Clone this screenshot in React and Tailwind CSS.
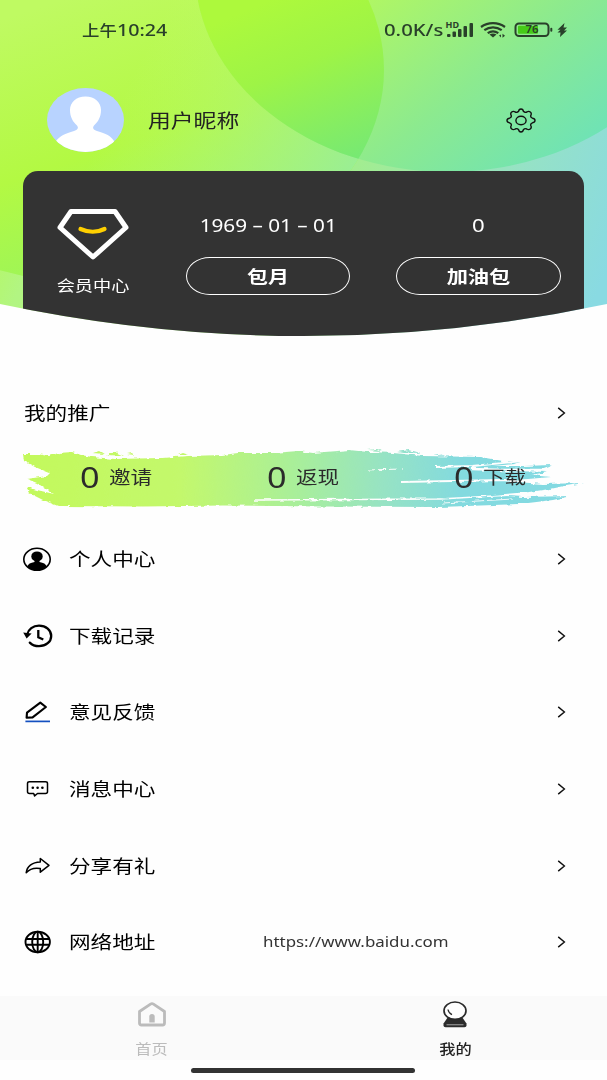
function Chevron() {
    return (
        <svg className="w-[9px] h-[12px] shrink-0" viewBox="0 0 9 12" fill="none" stroke="#111" strokeWidth="1.4">
            <path d="M1.2 0.9L7.4 6L1.2 11.1" />
        </svg>
    );
}

function UserIcon() {
    return (
        <svg className="w-[30px] h-[25px]" viewBox="0 0 30 25">
            <ellipse cx="14" cy="12.3" rx="13.2" ry="11" fill="none" stroke="#000" strokeWidth="1.6" />
            <ellipse cx="14" cy="9.4" rx="5.7" ry="5" />
            <path d="M11.5 12h5v3c4 .8 6.5 2 7.300 4.600C21 22.600 17.500 23.500 14 23.500S7 22.600 4.200 19.600C5 17 7.500 15.800 11.500 15z" />
        </svg>
    );
}

function HistoryIcon() {
    return (
        <svg className="w-[30px] h-[24px]" viewBox="0 0 30 24" fill="none" stroke="#000" strokeWidth="2.300">
            <path d="M4.200 10.500C5.300 5.200 10 1.600 16 1.600c7 0 12.200 4.500 12.200 10.300S23 22.200 16 22.200c-3.700 0-7-1.300-9.200-3.600" strokeLinecap="round" />
            <path d="M0.200 8.500L8.600 9.500L3.600 14.500z" fill="#000" stroke="none" />
            <path d="M15.300 6v7.200l5 2.300" />
        </svg>
    );
}

function PenIcon() {
    return (
        <svg className="w-[30px] h-[24px]" viewBox="0 0 30 24" fill="none" stroke="#000" strokeWidth="2.100">
            <path d="M3.600 17.700L4 12.700L17.300 2.600L22.900 7L9.600 17.400z" strokeLinejoin="round" />
            <path d="M2.400 21.400H27" stroke="#1450c0" strokeWidth="1.700" />
        </svg>
    );
}

function MessageIcon() {
    return (
        <svg className="w-[30px] h-[24px]" viewBox="0 0 30 24" fill="none" stroke="#000" strokeWidth="1.500">
            <path d="M6.500 4.800H22.500Q24.500 4.800 24.500 6.500V14.800Q24.500 16.500 22.500 16.500H14.500L11.600 18.900L10.700 16.500H6.500Q4.500 16.500 4.500 14.800V6.500Q4.500 4.800 6.500 4.800z" strokeLinejoin="round" />
            <g fill="#000" stroke="none">
                <circle cx="9.800" cy="10.700" r="1.300" />
                <circle cx="14.600" cy="10.700" r="1.300" />
                <circle cx="19.400" cy="10.700" r="1.300" />
            </g>
        </svg>
    );
}

function ShareIcon() {
    return (
        <svg className="w-[30px] h-[24px]" viewBox="0 0 30 24" fill="none" stroke="#000" strokeWidth="1.500">
            <path d="M17.300 8V4.500L26 11.400L17.300 18.200V14.500C11 13.400 6.500 15 3.200 18.800C3.800 12.500 9 8.200 17.300 8z" strokeLinejoin="round" />
        </svg>
    );
}

function GlobeIcon() {
    return (
        <svg className="w-[30px] h-[24px]" viewBox="0 0 30 24" fill="none" stroke="#000" strokeWidth="1.900">
            <ellipse cx="14.700" cy="12" rx="12.200" ry="10.200" />
            <ellipse cx="14.700" cy="12" rx="5.500" ry="10.200" />
            <path d="M14.700 2V22M3.300 9H26.100M3.300 14.800H26.100" />
        </svg>
    );
}

const menu = [
    { label: "个人中心", icon: UserIcon },
    { label: "下载记录", icon: HistoryIcon },
    { label: "意见反馈", icon: PenIcon },
    { label: "消息中心", icon: MessageIcon },
    { label: "分享有礼", icon: ShareIcon },
    { label: "网络地址", icon: GlobeIcon, value: "https://www.baidu.com" },
];

const stats = ["邀请", "返现", "下载"];

function HeaderBackground() {
    return (
        <svg className="absolute inset-0 w-[607px] h-[340px]" viewBox="0 0 607 340">
            <defs>
                <linearGradient id="base" gradientUnits="userSpaceOnUse" x1="60" y1="40" x2="607" y2="270">
                    <stop offset="0" stopColor="#b6f95a" />
                    <stop offset="0.100" stopColor="#b2f582" />
                    <stop offset="0.500" stopColor="#a4ef87" />
                    <stop offset="0.800" stopColor="#96e2c5" />
                    <stop offset="1" stopColor="#89dae2" />
                </linearGradient>
                <linearGradient id="left" gradientUnits="userSpaceOnUse" x1="60" y1="0" x2="150" y2="270">
                    <stop offset="0" stopColor="#bffa62" />
                    <stop offset="0.550" stopColor="#b3f943" />
                    <stop offset="1" stopColor="#99f45c" />
                </linearGradient>
                <linearGradient id="leftFade" gradientUnits="userSpaceOnUse" x1="140" y1="60" x2="360" y2="170">
                    <stop offset="0" stopColor="#c1f978" stopOpacity="0" />
                    <stop offset="1" stopColor="#99ee96" />
                </linearGradient>
                <linearGradient id="right" gradientUnits="userSpaceOnUse" x1="370" y1="0" x2="530" y2="200">
                    <stop offset="0" stopColor="#aff665" />
                    <stop offset="0.500" stopColor="#8cea8f" />
                    <stop offset="1" stopColor="#6de2b8" />
                </linearGradient>
                <linearGradient id="overlap" gradientUnits="userSpaceOnUse" x1="270" y1="0" x2="340" y2="165">
                    <stop offset="0" stopColor="#adf93c" />
                    <stop offset="0.400" stopColor="#9ef446" />
                    <stop offset="1" stopColor="#77e973" />
                </linearGradient>
                <clipPath id="rightClip">
                    <ellipse cx="448" cy="-30" rx="253" ry="202" />
                </clipPath>
            </defs>
            <rect width="607" height="340" fill="url(#base)" />
            <ellipse cx="100" cy="70" rx="284" ry="214" fill="url(#left)" />
            <ellipse cx="100" cy="70" rx="284" ry="214" fill="url(#leftFade)" />
            <ellipse cx="448" cy="-30" rx="253" ry="202" fill="url(#right)" />
            <ellipse cx="100" cy="70" rx="284" ry="214" fill="url(#overlap)" clipPath="url(#rightClip)" />
        </svg>
    );
}

function StatusIcons() {
    return (
        <svg className="w-[126px] h-[20px]" viewBox="0 0 126 20" fill="#29402a">
            <text x="0.500" y="7.800" fontSize="8" fontWeight="700" textLength="13.500" lengthAdjust="spacingAndGlyphs">HD</text>
            <rect x="2" y="14" width="3.500" height="3" rx="1" />
            <rect x="7.500" y="11.500" width="3.500" height="5.500" rx="1" />
            <rect x="13" y="9" width="3.500" height="8" rx="1" />
            <rect x="18.500" y="6" width="3.500" height="11" rx="1" />
            <rect x="24.500" y="3" width="3.500" height="14" rx="1" />
            <g fill="none" stroke="#29402a" strokeWidth="2.200">
                <path d="M36 7C43 1.900 53 1.900 60 7" />
                <path d="M39.300 10.200C44.500 6.400 51.500 6.400 56.700 10.200" />
                <path d="M42.700 13.200C46 11 50 11 53.300 13.200" />
            </g>
            <path d="M44.500 14.500Q48 12.500 51.500 14.500L48 17.500z" />
            <path d="M54 15.500l2-1v3zM57.500 13.800l2.500 2-2.500 2z" />
            <rect x="70.500" y="3.500" width="33" height="12.500" rx="3.500" fill="none" stroke="#29402a" strokeWidth="2" />
            <rect x="73" y="5.700" width="20" height="8" rx="1" fill="#46cb18" />
            <rect x="105.300" y="7.700" width="2" height="4" rx="1" />
            <text x="80.500" y="13.400" fontSize="10.500" fontWeight="600" textLength="13" lengthAdjust="spacingAndGlyphs">76</text>
            <path d="M119.500 3L112.500 9.800H115.500L112.500 12.500H115.500L115 17L122 10.500H119L122 7.500H118.500z" />
        </svg>
    );
}

function BrushStroke() {
    return (
        <svg className="absolute inset-0 w-[561px] h-[68px]" viewBox="0 0 561 68">
            <defs>
                <linearGradient id="brush" gradientUnits="userSpaceOnUse" x1="0" y1="0" x2="561" y2="0">
                    <stop offset="0" stopColor="#c3f95c" />
                    <stop offset="0.280" stopColor="#c3f86c" />
                    <stop offset="0.500" stopColor="#a7ee9d" />
                    <stop offset="0.640" stopColor="#97e3c3" />
                    <stop offset="0.780" stopColor="#83dadf" />
                    <stop offset="1" stopColor="#83d9e2" />
                </linearGradient>
                <filter id="rough" x="-2%" y="-10%" width="104%" height="120%">
                    <feTurbulence type="fractalNoise" baseFrequency="0.120 0.350" numOctaves="2" seed="7" />
                    <feDisplacementMap in="SourceGraphic" scale="4" xChannelSelector="R" yChannelSelector="G" />
                    <feGaussianBlur stdDeviation="0.350" />
                </filter>
            </defs>
            <g filter="url(#rough)">
                <path
                    fill="url(#brush)"
                    d="M0 11L14 11L25 13L36 10L49 9L58 12L69 14L92 16L139 15L165 13L200 12L215 10L250 10L275 8L290 10L315 8L326 7L345 9L370 10L400 13L457 14L480 18L500 18L492 21L470 23L500 23L529 22L518 26L498 28L524 29L508 32L528 34L505 36L480 38L520 41L561 40L542 43L527 46L506 49L470 52L500 54L548 53L530 57L497 61L417 64L300 63.500L200 62.500L120 63.500L35 63L22 58L6 50L3 44L14 47L31 51L20 44L14 40L4 36L24 33L27 30L12 24L1 18z"
                />
                <g fill="url(#brush)">
                    <path d="M70 10l6-2 5 3zM84 12l8-3 9 4zM104 11l5-1 2 2zM155 12l5-2 6 2z" />
                    <path d="M345 7l8-1 6 2zM374 9l12-2 12 3zM410 11l9 0 3 2z" />
                </g>
                <g fill="none" stroke="#fefefe">
                    <path d="M412 24L450 23L500 18" strokeWidth="1.800" />
                    <path d="M448 26L480 27L526 27" strokeWidth="2.400" />
                    <path d="M378 39L430 38L480 37L515 38" strokeWidth="1.800" />
                    <path d="M232 57L330 56.500L417 56L470 53L530 50" strokeWidth="1.600" />
                    <path d="M345 27L380 26" strokeWidth="1" strokeDasharray="7 4" />
                    <path d="M420 60L490 56" strokeWidth="0.900" />
                </g>
            </g>
        </svg>
    );
}

export default function App() {
    return (
        <div className="w-[607px] h-[1080px] overflow-hidden bg-[#fefefe] text-black font-['Noto_Sans','Noto_Sans_CJK_SC',sans-serif] flex flex-col">
            <header className="relative h-[340px] shrink-0 [clip-path:path('M0_0H607V304Q303.5_368_0_304Z')]">
                <HeaderBackground />
                <div className="relative flex flex-col">
                    {/* Barra de estado */}
                    <div className="h-[60px] flex items-center pl-[82px] font-medium text-[#29402a]">
                        <span className="w-[35px] text-[15px]">
                            <span className="inline-block whitespace-nowrap origin-left scale-x-[1.16]">上午</span>
                        </span>
                        <span className="w-[267px] text-[16.5px]">
                            <span className="inline-block whitespace-nowrap origin-left scale-x-[1.19]">10:24</span>
                        </span>
                        <span className="w-[61px] text-[16.5px]">
                            <span className="inline-block whitespace-nowrap origin-left scale-x-[1.23]">0.0K/s</span>
                        </span>
                        <StatusIcons />
                    </div>

                    {/* Usuario */}
                    <div className="h-[111px] flex items-center pl-[46px]">
                        <svg className="w-[78px] h-[64px] mt-[9px]" viewBox="0 0 78 64">
                            <defs>
                                <clipPath id="avatar">
                                    <ellipse cx="39.500" cy="32" rx="38.500" ry="32" />
                                </clipPath>
                            </defs>
                            <g clipPath="url(#avatar)">
                                <rect width="78" height="64" fill="#b8d3ff" />
                                <path fill="#fff" d="M39.500 8.500C49 8.500 55 14.500 55 22C55 29 52 34 48 37.500C46 40 47.500 42 51 43C60 45.500 65 48 68 53V64H10V53C14 48 19 45.500 28 43C31.500 42 33 40 31 37.500C27 34 24 29 24 22C24 14.500 30 8.500 39.500 8.500z" />
                            </g>
                        </svg>
                        <span className="ml-6 mt-[11px] w-[358px] text-[19px] text-[#222]">
                            <span className="inline-block whitespace-nowrap origin-left scale-x-[1.2]">用户昵称</span>
                        </span>
                        <svg className="w-[30px] h-[25px] mt-[10px]" viewBox="0 0 30 25" fill="none" stroke="#111" strokeWidth="1.400" strokeLinejoin="round">
                            <path d="M12.600 3.300Q12.900 1 15 1T17.400 3.300Q18.800 5 20.800 4Q22.700 2.700 24.300 4T24.800 7.500Q24.200 9.400 26.500 10.200Q29 10.600 29 12.500T26.500 14.800Q24.200 15.600 24.800 17.500Q25.900 19.700 24.300 21T20.800 21Q18.800 20 17.400 21.700Q17 24 15 24T12.600 21.700Q11.200 20 9.200 21Q7.300 22.300 5.700 21T5.200 17.500Q5.800 15.600 3.500 14.800Q1 14.400 1 12.500T3.500 10.200Q5.800 9.400 5.200 7.500Q4.100 5.300 5.700 4T9.200 4Q11.200 5 12.600 3.300z" />
                            <ellipse cx="15" cy="12.500" rx="5.100" ry="4.300" />
                        </svg>
                    </div>

                    {/* Tarjeta de miembro */}
                    <div className="mx-[23px] h-[170px] rounded-t-[15px] bg-[#333] text-white flex">
                        <div className="w-[140px] pt-[37px] flex flex-col items-center">
                            <svg className="w-[74px] h-[54px]" viewBox="0 0 74 54" fill="none" strokeLinecap="round" strokeLinejoin="round">
                                <path d="M15 3.500H59L70 19.500L37 49L4 19.500z" stroke="#fff" strokeWidth="5" />
                                <path d="M24.500 21Q37 26.500 48.500 21" stroke="#ffd000" strokeWidth="4.200" />
                            </svg>
                            <span className="mt-[11px] text-[15px] leading-6 inline-block whitespace-nowrap scale-x-[1.21]">会员中心</span>
                        </div>
                        <div className="w-[210px] pt-[42px] flex flex-col items-center">
                            <span className="text-[18.5px] leading-6 whitespace-nowrap scale-x-[1.12]">1969 – 01 – 01</span>
                            <div className="mt-5 w-[164px] h-[38px] rounded-[24px/19px] border-[1.5px] border-white flex items-center justify-center">
                                <span className="text-[17px] mt-px font-bold scale-x-[1.23]">包月</span>
                            </div>
                        </div>
                        <div className="w-[210px] pt-[42px] flex flex-col items-center">
                            <span className="text-[18.5px] leading-6 scale-x-[1.2]">0</span>
                            <div className="mt-5 w-[165px] h-[38px] rounded-[24px/19px] border-[1.5px] border-white flex items-center justify-center">
                                <span className="text-[17px] mt-px font-bold scale-x-[1.25]">加油包</span>
                            </div>
                        </div>
                    </div>
                </div>
            </header>

            {/* Promoción */}
            <div className="mt-[43px] h-[60px] shrink-0 pl-[23.5px] pr-[41px] flex items-center justify-between">
                <span className="text-[18px] whitespace-nowrap origin-left scale-x-[1.2]">我的推广</span>
                <Chevron />
            </div>
            <div className="relative mx-[23px] h-[78px] shrink-0">
                <BrushStroke />
                <div className="relative h-[68px] flex pl-[57px] text-[#2b2b2b]">
                    {stats.map((name) => (
                        <div key={name} className="w-[187px] shrink-0 last:w-[110px] flex items-center">
                            <span className="w-[29px] -mt-px text-[29px] leading-none">
                                <span className="inline-block origin-left scale-x-[1.18]">0</span>
                            </span>
                            <span className="text-[18px] whitespace-nowrap origin-left scale-x-[1.2]">{name}</span>
                        </div>
                    ))}
                </div>
            </div>

            {/* Menú */}
            <div className="shrink-0 flex flex-col">
                {menu.map((item) => (
                    <div key={item.label} className="h-[76.6px] pl-[23px] pr-[41px] flex items-center">
                        <item.icon />
                        <span className="ml-[15.5px] mt-px w-[194.5px] text-[18px]">
                            <span className="inline-block whitespace-nowrap origin-left scale-x-[1.2]">{item.label}</span>
                        </span>
                        <span className="flex-1 text-[14.5px] text-[#333]">
                            {item.value && <span className="inline-block whitespace-nowrap origin-left scale-x-[1.165]">{item.value}</span>}
                        </span>
                        <Chevron />
                    </div>
                ))}
            </div>

            {/* Navegación inferior */}
            <nav className="mt-auto h-[64px] shrink-0 bg-[#fafafa] grid grid-cols-2">
                <div className="flex flex-col items-center pt-[5px] text-[#bbb]">
                    <svg className="w-[30px] h-[26px]" viewBox="0 0 30 26" fill="none" stroke="#bbb" strokeWidth="2.800">
                        <path d="M2.500 10.500L13.500 3.200Q15 2.200 16.500 3.200L27.500 10.500V22Q27.500 24 25.500 24H4.500Q2.500 24 2.500 22z" strokeLinejoin="round" />
                        <path d="M12.300 21.500V15.500Q12.300 13 15 13T17.700 15.500V21.500z" fill="#bbb" stroke="none" />
                    </svg>
                    <span className="mt-[12px] text-[13.5px] leading-5 scale-x-[1.2]">首页</span>
                </div>
                <div className="flex flex-col items-center pt-[5px] text-[#222]">
                    <svg className="w-[26px] h-[27px]" viewBox="0 0 26 27">
                        <path d="M6 16H20L24.500 22.500V24.500Q24.500 26.300 22.500 26.300H3.500Q1.500 26.300 1.500 24.500V22.500z" fill="#2b2b2b" />
                        <ellipse cx="13" cy="9.700" rx="11" ry="8.700" fill="#fff" stroke="#2b2b2b" strokeWidth="1.700" />
                        <path d="M6 8.500Q6.500 12 10 13.700" fill="none" stroke="#2b2b2b" strokeWidth="1.300" />
                        <path d="M4.500 23.700H21.500" stroke="#888" strokeWidth="1.300" />
                    </svg>
                    <span className="mt-[11px] text-[13.5px] leading-5 font-medium scale-x-[1.2]">我的</span>
                </div>
            </nav>
            <div className="h-[20px] shrink-0 flex justify-center items-center">
                <div className="w-[224px] h-[5px] mr-px rounded-full bg-[#333]" />
            </div>
        </div>
    );
}
